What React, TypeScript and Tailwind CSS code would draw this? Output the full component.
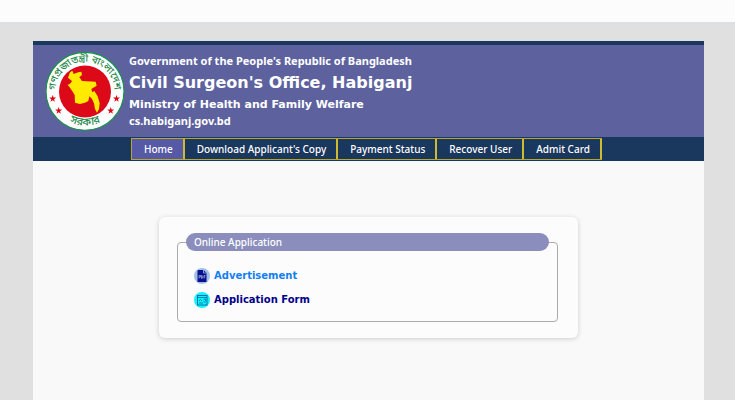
import clsx from 'clsx';

const navItems = [
  { label: 'Home', href: '#home', active: true },
  { label: "Download Applicant's Copy", href: '#copy', active: false },
  { label: 'Payment Status', href: '#payment', active: false },
  { label: 'Recover User', href: '#recover', active: false },
  { label: 'Admit Card', href: '#admit', active: false },
];

const stars = [
  [52.7, 99.7],
  [58.7, 111.7],
  [116.5, 99.7],
  [110.7, 111.7],
];

function GovSeal() {
  return (
    <svg viewBox="45 52 80 80" className="size-20 shrink-0" role="img" aria-label="Government seal">
      <defs>
        <path id="seal-top" d="M 57.5 103 A 29.5 29.5 0 1 1 112.5 103" />
        <path id="seal-bottom" d="M 58 113.5 A 34.5 34.5 0 0 0 112 113.5" />
      </defs>
      <circle cx="85" cy="92.3" r="39" fill="#fff" stroke="#159447" strokeWidth="1.2" />
      <circle cx="85" cy="92.5" r="26" fill="#dc0a18" />
      {/* map of Bangladesh */}
      <path
        transform="translate(30 36) scale(.3333)"
        d="M127 107L131 117 145 112 154 110 156 120 148 127 156 138 197 140 200 152 190 158 184 162 187 172 193 168 203 184 209 205 207 222 201 233 195 222 192 205 186 192 178 184 175 198 165 203 150 207 135 203 134 180 128 170 120 158 113 150 122 145 126 138 114 128 120 112Z"
        fill="#ffea00"
      />
      {stars.map(([x, y]) => (
        <path
          key={`${x}-${y}`}
          transform={`translate(${x} ${y})`}
          d="M0 -3.6L.9 -1.100H3.500L1.400 .5 2.200 3 0 1.500 -2.200 3 -1.400 .5 -3.500 -1.100H-.9Z"
          fill="#dc0a18"
        />
      ))}
      <g fill="#1f8a4c" textAnchor="middle" className="font-['Noto_Sans_Bengali','Noto_Sans',sans-serif]">
        <text fontSize="10" fontWeight="500">
          <textPath href="#seal-top" startOffset="50%">গণপ্রজাতন্ত্রী বাংলাদেশ</textPath>
        </text>
        <text fontSize="11" fontWeight="500">
          <textPath href="#seal-bottom" startOffset="50%">সরকার</textPath>
        </text>
      </g>
    </svg>
  );
}

function PdfIcon() {
  return (
    <svg viewBox="0 0 16 16" className="size-4" aria-hidden="true">
      <circle cx="8" cy="8" r="8" fill="#9fc0e8" />
      <path d="M4.5 2h5l3 3v9h-9v-11q0 -1 1 -1z" fill="#0a0f8c" />
      <path d="M9.5 2v3h3" stroke="#9fc0e8" strokeWidth=".8" fill="none" />
      <path
        d="M5 10.5v-3h1.5v1.5h-1.5M7.5 7.5v3q1.8 -.3 1.3 -2 -.2 -1 -1.3 -1M10 10.5v-3h1.5M10 9h1.2"
        stroke="#a9b8e8"
        strokeWidth=".7"
        fill="none"
      />
    </svg>
  );
}

function FormIcon() {
  return (
    <svg viewBox="0 0 16 16" className="size-4" aria-hidden="true">
      <circle cx="8" cy="8" r="8" fill="#0ff4fb" />
      <rect x="3.5" y="3.5" width="9.5" height="9.5" fill="none" stroke="#0870a8" strokeWidth="1" />
      <path d="M3.5 5.5h9.5M5 9l1.5 -1.5 1.5 1.5M9.5 7.2h2v2M9.5 9.5l2 1M5 11h4" fill="none" stroke="#0870a8" strokeWidth=".9" />
    </svg>
  );
}

export default function App() {
  return (
    <div className="min-h-screen bg-[#e0e0e0] font-['DejaVu_Sans',sans-serif]">
      <div className="h-6 border-b-2 border-[#d7e1ea] bg-[#fcfcfc]" />

      <div className="mt-[17px] mr-[31px] ml-[33px] flex min-h-[calc(100vh-41px)] flex-col bg-[#f9f9f9]">
        <header className="flex items-center border-t-4 border-[#1a375d] bg-[#5d629f] py-1 pl-3 font-bold text-white">
          <GovSeal />
          <div className="ml-1 flex h-[84px] flex-col justify-center whitespace-nowrap">
            <p className="font-['Noto_Sans',sans-serif] text-[11px] leading-4">
              Government of the People's Republic of Bangladesh
            </p>
            <h1 className="text-[16px] leading-7">Civil Surgeon's Office, Habiganj</h1>
            <p className="text-[11px] leading-4">Ministry of Health and Family Welfare</p>
            <p className="font-['Noto_Sans',sans-serif] text-[11px] leading-4">cs.habiganj.gov.bd</p>
          </div>
        </header>

        <nav className="flex h-6 items-center bg-[#1a375d] pl-[98px]">
          <ul className="flex border-y border-l border-[#b5a72f]">
            {navItems.map((item) => (
              <li key={item.href} className="border-r-2 border-[#cdbb30]">
                <a
                  href={item.href}
                  className={clsx(
                    "block pr-[10px] pl-3 font-['Noto_Sans',sans-serif] text-[10px] leading-5 font-medium whitespace-nowrap text-white",
                    item.active && 'bg-[#5559a6]',
                  )}
                >
                  {item.label}
                </a>
              </li>
            ))}
          </ul>
        </nav>

        <main className="mx-auto mt-14 w-full max-w-[419px] rounded-md bg-[#fcfcfc] py-4 pr-5 pl-[18px] shadow-[0_1px_5px_rgba(0,0,0,0.18)]">
          <fieldset className="rounded border border-[#aaaaaa] px-2 pb-[9px]">
            <legend className="w-full rounded-full bg-[#8b8ebd] px-2 font-['Noto_Sans',sans-serif] text-[10px] leading-[18px] font-medium text-white">
              Online Application
            </legend>
            <ul className="mt-[13px] px-2 text-[10px] leading-6 font-bold">
              <li>
                <a href="#advertisement" className="flex items-center gap-1 text-[#1380f0]">
                  <PdfIcon />
                  Advertisement
                </a>
              </li>
              <li>
                <a href="#form" className="flex items-center gap-1 text-[#00008b]">
                  <FormIcon />
                  Application Form
                </a>
              </li>
            </ul>
          </fieldset>
        </main>
      </div>
    </div>
  );
}
